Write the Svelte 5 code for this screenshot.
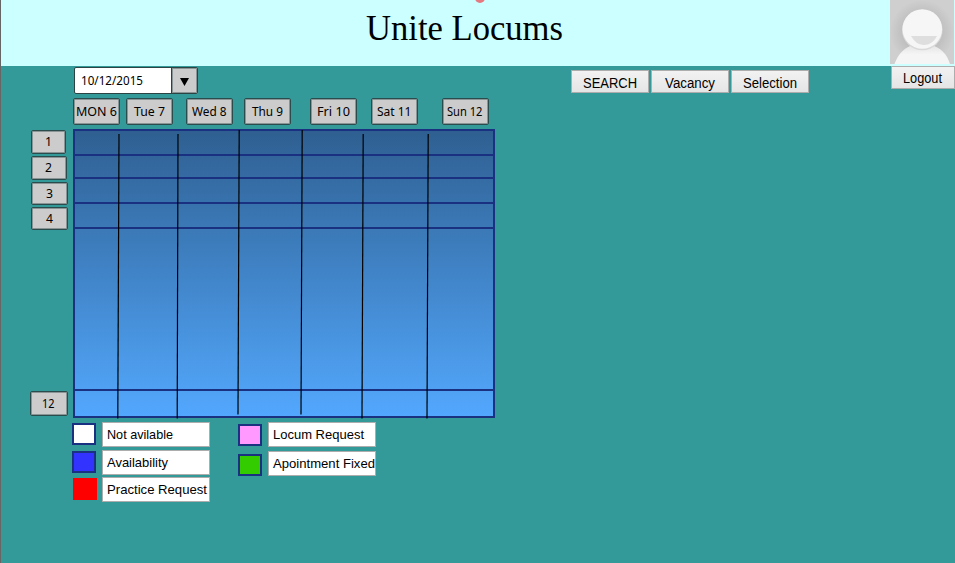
<script>
  const days = [
    { name: 'MON 6', gap: 0, w: 41 },
    { name: 'Tue 7', gap: 6, w: 31 },
    { name: 'Wed 8', gap: 13, w: 34.5 },
    { name: 'Thu 9', gap: 11, w: 31 },
    { name: 'Fri 10', gap: 19, w: 33 },
    { name: 'Sat 11', gap: 14, w: 34.5 },
    { name: 'Sun 12', gap: 24, w: 35.5 }
  ];
  const hours = [
    { name: '1', left: 1, top: 0, width: 35, height: 24, w: 7 },
    { name: '2', left: 1, top: 2, width: 36, height: 24, w: 7 },
    { name: '3', left: 1, top: 2, width: 37, height: 23, w: 7 },
    { name: '4', left: 1, top: 2, width: 37, height: 23, w: 7 },
    { name: '12', left: 0, top: 161, width: 38, height: 25, w: 12.5 }
  ];
  const rowLines = [26, 49, 74, 99, 261];
  const colLines = [
    [46, 5, 44.8, 289.5],
    [105, 5, 104.2, 289.5],
    [166.2, 1, 165, 285.5],
    [229.2, 1, 228, 285.5],
    [290.2, 5, 289, 289.5],
    [355.2, 5, 354, 289.5]
  ];
  const legend = [
    [
      { text: 'Not avilable', color: '#ffffff', top: 0, chip: 1, w: 66 },
      { text: 'Availability', color: '#3333ff', top: 3, chip: 1, w: 61 },
      { text: 'Practice Request', color: '#ff0000', top: 2, chip: 1, plain: true, w: 100 }
    ],
    [
      { text: 'Locum Request', color: '#ff99ff', top: 0, chip: 2, w: 91 },
      { text: 'Apointment Fixed', color: '#33cc00', top: 4, chip: 3, w: 102 }
    ]
  ];
  const actions = [
    { name: 'SEARCH', w: 54 },
    { name: 'Vacancy', w: 50 },
    { name: 'Selection', w: 54 }
  ];
</script>

{#snippet label(text, w, size, y)}
  <svg class="label" width={w} height="20" viewBox="0 0 {w} 20">
    <text x="0" {y} font-size={size} textLength={w} lengthAdjust="spacingAndGlyphs">{text}</text>
  </svg>
{/snippet}

<div class="page">
  <header>
    <i class="dot"></i>
    <h1>{@render label('Unite Locums', 197, 36, 20)}</h1>
    <svg class="avatar" width="64" height="64" viewBox="0 0 64 64">
      <defs>
        <radialGradient id="back"><stop offset="0.55" stop-color="#bdbdbd" /><stop offset="1" stop-color="#cfcfcf" /></radialGradient>
        <linearGradient id="coat" x1="0" y1="0" x2="0" y2="1"><stop offset="0" stop-color="#e4e4e4" /><stop offset="0.5" stop-color="#f5f5f5" /></linearGradient>
      </defs>
      <rect width="64" height="64" fill="#cfcfcf" />
      <circle cx="32" cy="32" r="32" fill="url(#back)" />
      <path d="M4.500 64C8 54 15 47 23 45H41C50 47 57 54 60 64Z" fill="url(#coat)" />
      <circle cx="32.300" cy="30" r="20.300" fill="#d9d9d9" />
      <circle cx="32.300" cy="29" r="19.800" fill="#f6f6f6" />
      <path d="M21 36H47C44 42 39 45 34 45C28 45 24 41 21 36Z" fill="#dedede" />
    </svg>
  </header>

  <div class="toolbar">
    <div class="date">
      <span>{@render label('10/12/2015', 62, 12, 14)}</span>
      <b><svg width="9" height="8" viewBox="0 0 9 8"><path d="M0 0H9L4.5 8Z" /></svg></b>
    </div>
    <nav>
      {#each actions as a}
        <button>{@render label(a.name, a.w, 14, 14.5)}</button>
      {/each}
    </nav>
    <button class="logout">{@render label('Logout', 39, 14, 15)}</button>
  </div>

  <div class="days">
    {#each days as d}
      <div class="tile day" style="margin-left:{d.gap}px">{@render label(d.name, d.w, 12, 14)}</div>
    {/each}
  </div>

  <div class="schedule">
    <div class="hours">
      {#each hours as h}
        <div class="tile" style="margin-left:{h.left}px;margin-top:{h.top}px;width:{h.width}px;height:{h.height}px">
          {@render label(h.name, h.w, 12, 14)}
        </div>
      {/each}
    </div>
    <svg class="grid" width="422" height="291" viewBox="0 0 422 291">
      <defs>
        <linearGradient id="sky" x1="0" y1="0" x2="0" y2="1">
          <stop offset="0" stop-color="#2f5f91" />
          <stop offset="0.35" stop-color="#3b79b7" />
          <stop offset="0.92" stop-color="#50a2f5" />
          <stop offset="1" stop-color="#52a7fe" />
        </linearGradient>
      </defs>
      <rect x="1" y="1" width="420" height="287" fill="url(#sky)" stroke="#1a3080" stroke-width="2" />
      {#each rowLines as y}
        <path d="M1 {y}H421" stroke="#1a3080" stroke-width="2" />
      {/each}
      {#each colLines as [x1, y1, x2, y2]}
        <line {x1} {y1} {x2} {y2} stroke="#000" stroke-width="1.2" />
      {/each}
    </svg>
  </div>

  <div class="legend">
    {#each legend as group}
      <div class="group">
        {#each group as item}
          <div class="entry" style="margin-top:{item.top}px">
            <i class:plain={item.plain} style="background:{item.color};margin-top:{item.chip}px"></i>
            <span>{@render label(item.text, item.w, 13.5, 14)}</span>
          </div>
        {/each}
      </div>
    {/each}
  </div>
</div>

<style>
  :global(body) { margin: 0; background: #339999; }
  .page {
    box-sizing: border-box; width: 955px; height: 563px; overflow: hidden;
    border-left: 1px solid #666; background: #339999;
    font-family: "Liberation Sans", Arial, sans-serif; color: #000;
  }
  .label { display: block; overflow: visible; flex: none; }
  header { position: relative; height: 66px; background: #ccffff; display: flex; }
  h1 { margin: 20px 0 0 365px; font-family: "Liberation Serif", "Times New Roman", serif; font-weight: 400; line-height: 1; }
  .dot { position: absolute; left: 474px; top: -7px; width: 10px; height: 10px; border-radius: 50%; background: #e87880; }
  .avatar { margin-left: auto; margin-right: 1px; }
  .toolbar { display: flex; height: 32px; }
  .date {
    box-sizing: border-box; margin: 1px 0 0 73px; width: 124px; height: 27px; display: flex;
    border: 1px solid #2a4444; border-radius: 2px; background: #fff;
  }
  .date span { width: 90px; padding: 3px 0 0 6px; font-family: "Noto Sans", sans-serif; }
  .date b { flex: 1; border-left: 1px solid #2a4444; background: #ccc; display: flex; align-items: center; justify-content: center; padding-top: 3px; box-shadow: inset 0 0 0 1px #8a9494; }
  nav { display: flex; gap: 2px; margin: 4px 0 0 373px; }
  button {
    box-sizing: border-box; width: 78px; height: 23px; padding: 0; border: 1px solid #adadad;
    background: linear-gradient(#f2f2f2, #e5e5e5); display: flex; align-items: center; justify-content: center;
    font-family: "Liberation Sans", Arial, sans-serif;
  }
  nav button { padding-top: 2px; }
  .logout { width: 64px; margin-left: auto; padding-right: 2px; }
  .days { display: flex; margin-left: 72px; height: 31px; }
  .tile {
    box-sizing: border-box; display: flex; align-items: center; justify-content: center;
    border: 1px solid #2a4c4c; border-radius: 2px; background: #ccc; padding-right: 1px;
    box-shadow: inset 0 0 0 1px #8a9494; font-family: "Noto Sans", sans-serif;
  }
  .day { width: 47px; height: 27px; }
  .schedule { display: flex; height: 293px; }
  .hours { width: 42px; margin-left: 29px; padding-top: 1px; }
  .grid { margin-left: 1px; }
  .legend { display: flex; gap: 28px; margin-left: 71px; }
  .entry { display: flex; align-items: flex-start; height: 25px; }
  .entry i { box-sizing: border-box; width: 24px; height: 22px; border: 2px solid #1a3080; }
  .entry i.plain { border: 0; margin-left: 1px; margin-right: -1px; }
  .entry span { box-sizing: border-box; margin-left: 6px; width: 108px; height: 25px; border: 1px solid #adadad; background: #fff; padding: 2px 0 0 4px; }
</style>
